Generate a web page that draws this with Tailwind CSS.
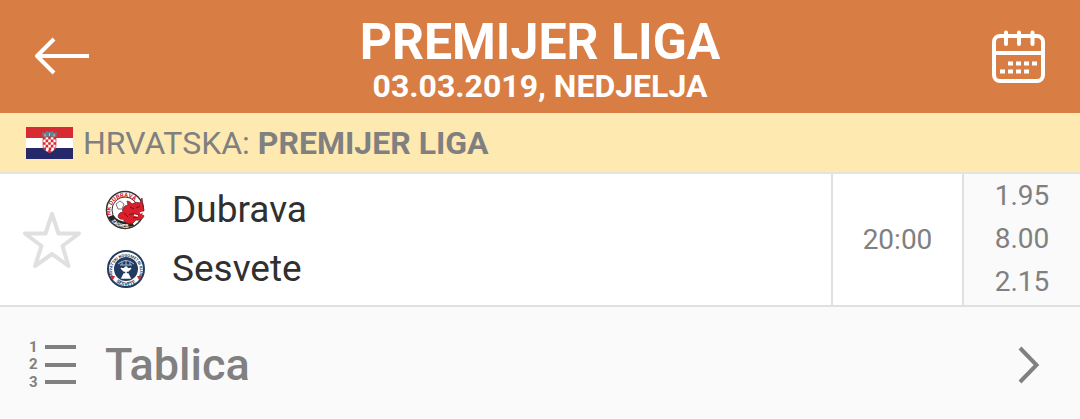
<!DOCTYPE html>
<html lang="hr">
<head>
<meta charset="utf-8">
<meta name="viewport" content="width=device-width, initial-scale=1">
<title>Premijer liga</title>
<script src="https://cdn.jsdelivr.net/npm/@tailwindcss/browser@4"></script>
</head>
<body class="flex min-h-screen flex-col bg-[#fafafa] font-['Roboto',sans-serif] text-[#808080]">
  <header class="flex h-[113px] items-center justify-between bg-[#d87d44] px-[34px] text-white">
    <button type="button" aria-label="Natrag" class="w-14">
      <svg class="block" width="56" height="40" viewBox="0 0 56 40" fill="none" stroke="currentColor" stroke-width="4" stroke-linejoin="round"><path d="M20 2 3 19 20 36M3 19H55"/></svg>
    </button>
    <div class="flex flex-col items-center pt-2">
      <h1 class="text-[50px] leading-[50px] font-bold">PREMIJER LIGA</h1>
      <p class="text-[32px] leading-[38px] font-bold">03.03.2019, NEDJELJA</p>
    </div>
    <button type="button" aria-label="Kalendar" class="flex w-14 justify-end">
      <svg class="block" width="55" height="54" viewBox="0 0 55 54" fill="none" stroke="currentColor" stroke-width="4">
        <rect x="3" y="6" width="49" height="45" rx="6"/>
        <path d="M3 23H52"/>
        <path d="M15 2.500V14M28 2.500V14M41.500 2.500V14" stroke-linecap="round"/>
        <path d="M17 33.500H46M9 41.500H38" stroke-dasharray="5 3"/>
      </svg>
    </button>
  </header>

  <section class="flex h-[61px] items-center gap-2.5 border-b-2 border-[#e5e3dc] bg-[#feeab1] px-[26px]">
    <svg role="img" aria-label="Hrvatska" width="47" height="32" viewBox="0 0 47 32" class="shrink-0">
      <path fill="#fff" d="M0 0H47V32H0z"/>
      <path fill="#d72b31" d="M0 0H47V11H0z"/>
      <path fill="#262969" d="M0 21H47V32H0z"/>
      <path fill="#5e8193" d="M16 5 18.500 6 21 4 23.500 5 26 4 28.500 6 31 5 30 11H17z"/>
      <path stroke="#d8c8a8" d="M19 7V10M23.500 6V9M28 7V10"/>
      <path fill="#fff" d="M17 10H30V18Q30 24 23.500 25.500 17 24 17 18z"/>
      <path fill="none" stroke="#d72b31" stroke-width="2.600" stroke-dasharray="2.600 2.600" d="M17 11.300H30M19.600 13.900H30M17 16.500H30M19.600 19.100H30M17.500 21.700H29M22.200 24.200H25"/>
      <path fill="none" stroke="#d72b31" stroke-width=".7" d="M17 10H30V18Q30 24 23.500 25.500 17 24 17 18z"/>
    </svg>
    <h2 class="text-[32px] leading-9">HRVATSKA: <b class="font-bold">PREMIJER LIGA</b></h2>
  </section>

  <main class="flex h-[133px] items-stretch border-b-2 border-[#e0e0e0] bg-white">
    <button type="button" aria-label="Dodaj u favorite" class="flex w-[104px] shrink-0 items-center pl-[22px]">
      <svg width="60" height="58" viewBox="0 0 60 58" fill="none" stroke="#e0e0e0" stroke-width="4" stroke-linejoin="round"><path d="M30 3 36.500 22.500H57L40.500 35 46.500 55 30 43 13 55 19.500 35 3 22.500H23.500Z"/></svg>
    </button>
    <div class="flex flex-1 flex-col justify-center">
      <div class="flex h-[59px] items-center gap-6">
        <svg role="img" aria-label="Grb Dubrava" width="44" height="44" viewBox="0 0 44 44" class="shrink-0 overflow-visible">
          <defs><path id="dt" d="M7 27A14.500 14.500 0 1 1 35.500 22"/><path id="db" d="M7.500 33A17.500 17.500 0 0 0 34 34"/></defs>
          <circle cx="21" cy="22" r="18.500" fill="#fff" stroke="#333" stroke-width="1.500"/>
          <circle cx="21" cy="22" r="13" fill="#fff" stroke="#333"/>
          <path d="M4 29Q9 38 19 40L30 38 28 33Q16 36 9 27Z" fill="#252525"/>
          <path fill="#d9202c" stroke="#6d2025" stroke-width=".7" d="M24 17 23 13Q26 13 28 16Q33 13 36 15L38 10 39 18Q41 22 38 25L40 28Q38 33 32 32L28 36Q21 36 19 31Q15 32 14 28Q15 24 19 24Q17 21 21 18Z"/>
          <path d="M14 21 12 16 16 13 20 16 18 21Z" fill="#fff" stroke="#777"/>
          <path d="M26 19 30 21M32 20 36 18M25 27Q30 24 35 28M20 25 24 29M29 30 34 29" fill="none" stroke="#661820" stroke-width="1"/>
          <path d="M36 25 40 24 39 27M30 27 34 28" stroke="#fff" stroke-width="1.500" fill="none"/>
          <text font-size="6" font-weight="700" fill="#d9202c"><textPath href="#dt">NK DUBRAVA</textPath></text>
          <text font-size="5" font-weight="700" fill="#fff"><textPath href="#db">ZAGREB</textPath></text>
        </svg>
        <span class="text-[37px] leading-[44px] text-[#303030]">Dubrava</span>
      </div>
      <div class="flex h-[59px] items-center gap-6">
        <svg role="img" aria-label="Grb Sesvete" width="44" height="44" viewBox="0 0 44 44" class="shrink-0 overflow-visible">
          <defs><path id="st" d="M9 29A14 14 0 1 1 35 29"/><path id="sb" d="M12 35A16.500 16.500 0 0 0 33 35"/></defs>
          <circle cx="22" cy="22" r="18" fill="#fff" stroke="#223b61" stroke-width="2"/>
          <circle cx="22" cy="22" r="12" fill="#223b61"/>
          <path d="M14 17Q22 10 30 17M16 18H28M18 15V18M22 13V18M26 15V18" fill="none" stroke="#a9bacd"/>
          <circle cx="22" cy="21" r="1.800" fill="#fff"/>
          <path d="M17 21 20 24H24L27 21M22 23V28M18 31 20 27H24L26 31Z" fill="#fff" stroke="#fff" stroke-width="1.500"/>
          <path d="M6 29H11L9 33ZM38 29H33L35 33Z" fill="#c92b37"/>
          <text font-size="4" font-weight="700" fill="#223b61"><textPath href="#st">HRVATSKI NOGOMETNI KLUB</textPath></text>
          <text font-size="5" font-weight="700" fill="#223b61"><textPath href="#sb">SESVETE</textPath></text>
        </svg>
        <span class="text-[37px] leading-[44px] text-[#303030]">Sesvete</span>
      </div>
    </div>
    <time datetime="2019-03-03T20:00" class="flex w-[131px] shrink-0 items-center justify-center border-l-2 border-[#e0e0e0] text-[28px] leading-8">20:00</time>
    <ul class="flex w-[118px] shrink-0 flex-col justify-center border-l-2 border-[#e0e0e0] bg-[#fafafa] pb-0.5 text-center text-[28px] leading-[43px]">
      <li>1.95</li>
      <li>8.00</li>
      <li>2.15</li>
    </ul>
  </main>

  <a href="#tablica" class="flex flex-1 items-center gap-7 pt-1 pr-10 pl-7">
    <svg aria-hidden="true" width="49" height="48" viewBox="0 0 49 48" class="shrink-0 overflow-visible">
      <g font-size="15" font-weight="700" fill="#808080"><text x="1" y="11">1</text><text x="1" y="28">2</text><text x="1" y="46">3</text></g>
      <path d="M17 6H48M17 24H48M17 41H48" stroke="#808080" stroke-width="4"/>
    </svg>
    <span class="text-[45px] leading-[52px] font-medium">Tablica</span>
    <svg aria-hidden="true" width="22" height="38" viewBox="0 0 22 38" fill="none" stroke="#808080" stroke-width="4" class="ml-auto shrink-0"><path d="M2 2 18.500 19 2 36"/></svg>
  </a>
</body>
</html>
